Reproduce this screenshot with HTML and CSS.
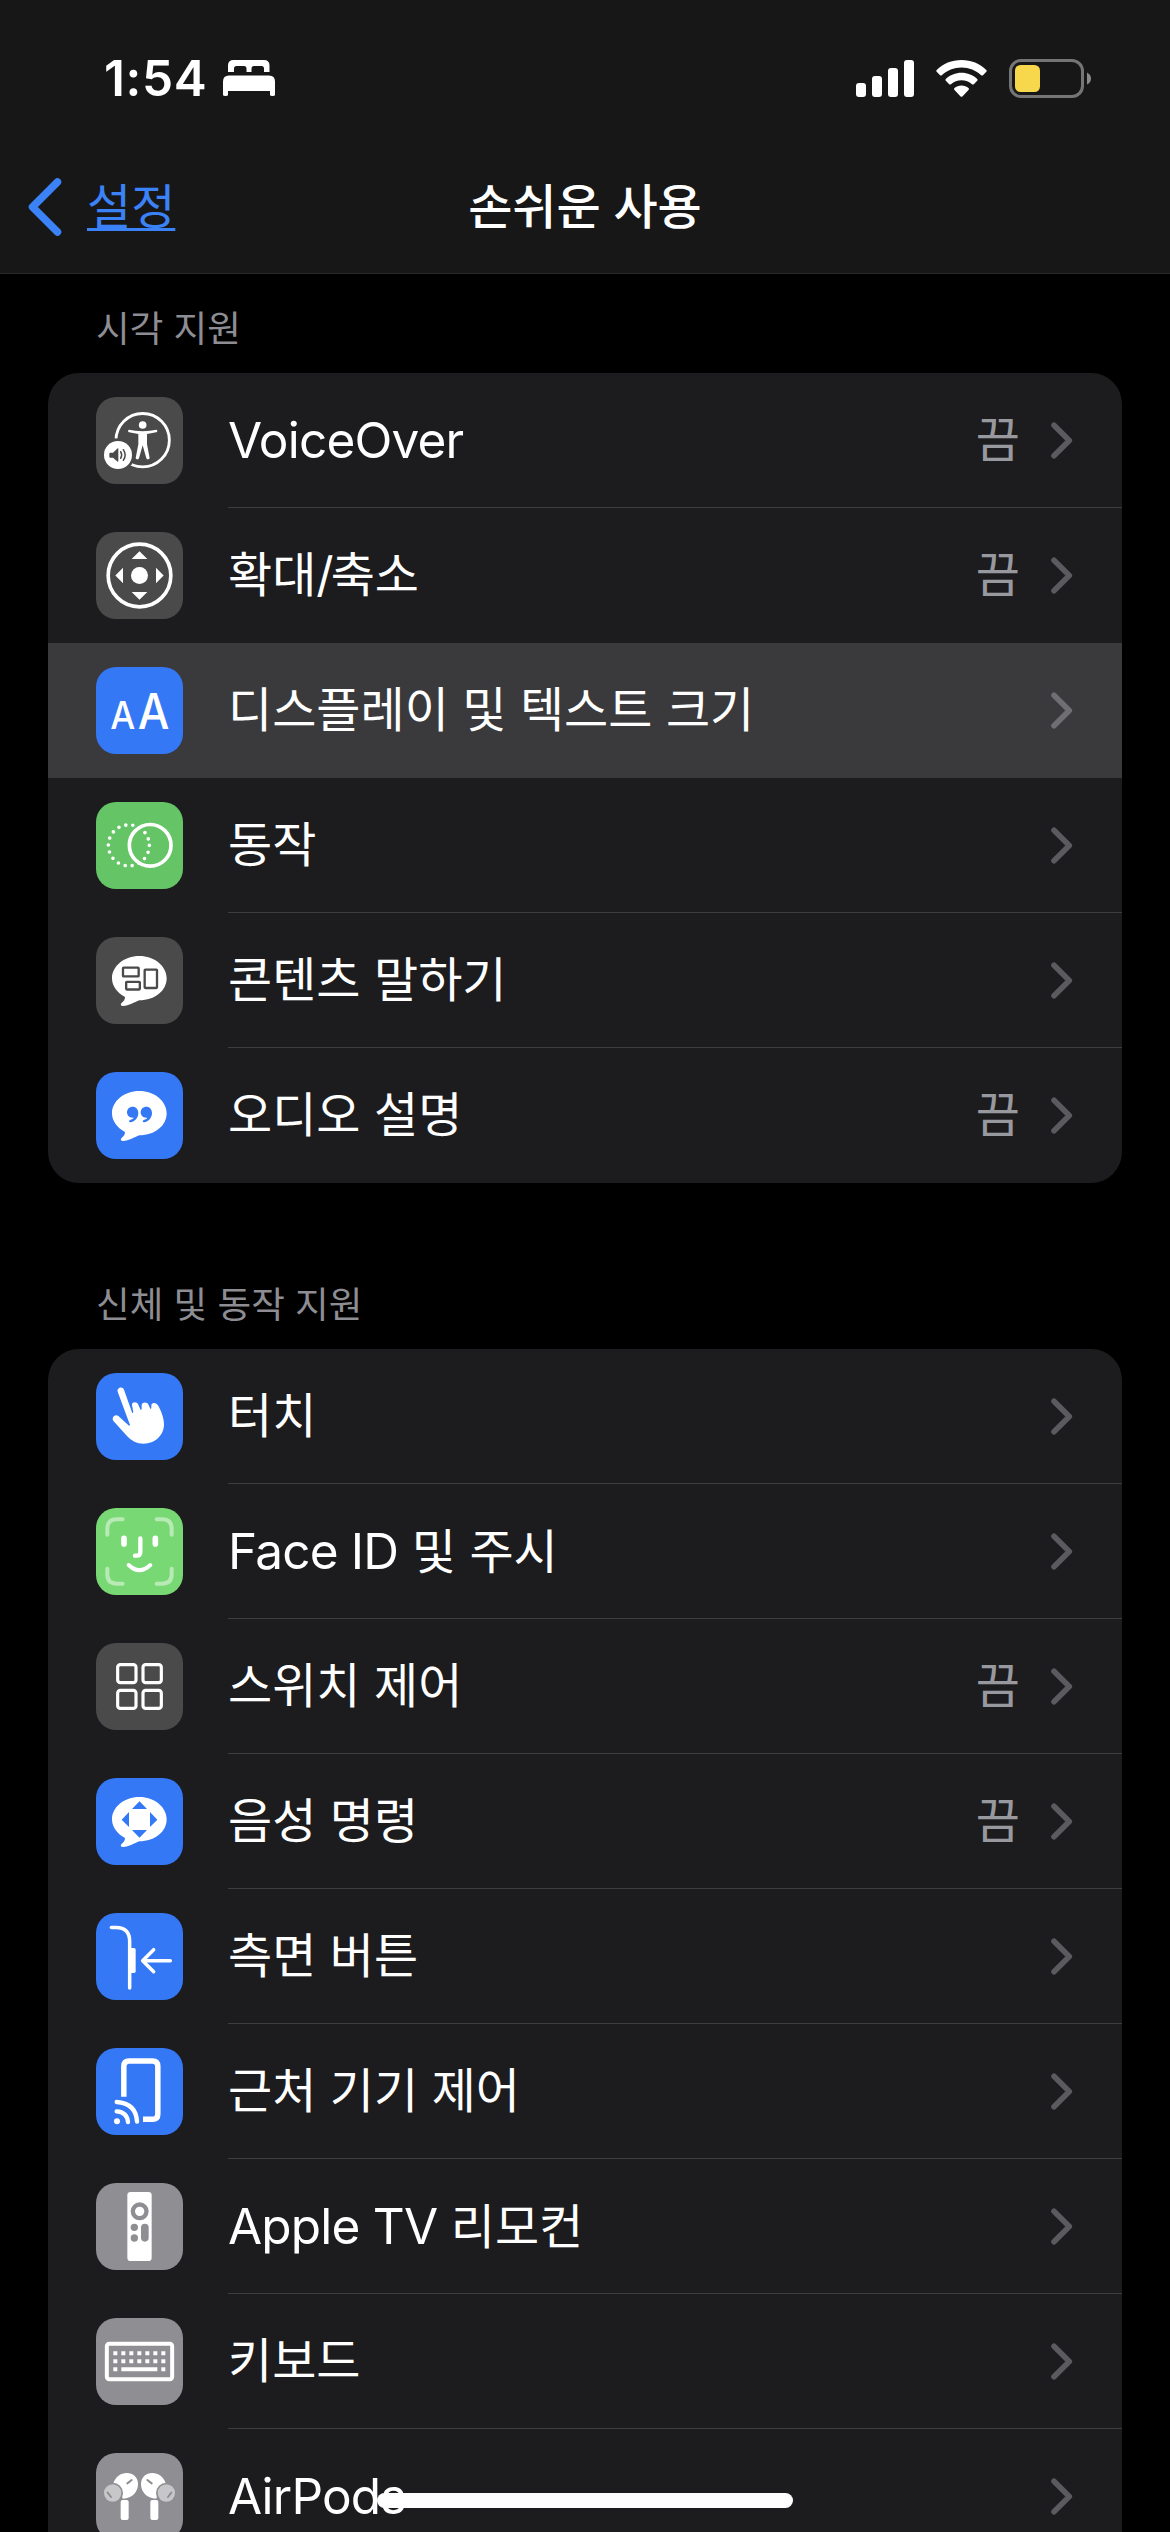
FILE: index.html
```html
<!DOCTYPE html>
<html lang="ko">
<head>
<meta charset="utf-8">
<title>손쉬운 사용</title>
<link rel="stylesheet" href="styles.css">
</head>
<body>
<svg class="defs" width="0" height="0">
  <symbol id="chevron" viewBox="0 0 22 37"><path d="M3 3.2 18.3 18.5 3 33.8" fill="none" stroke="currentColor" stroke-width="5.6" stroke-linecap="round" stroke-linejoin="round"/></symbol>
  <symbol id="bubble" viewBox="0 0 261 261"><path fill="#fff" d="M130 57c45 0 82 30 82 67s-35 66-82 66c-15 6-31 16-49 17-7 0-8-5-5-8 7-6 11-11 11-19-23-12-39-32-39-56 0-37 37-67 82-67z"/></symbol>
</svg>
<div class="screen">
  <header class="top">
    <div class="status">
      <div class="status-left">
        <span class="time">1:54</span>
        <svg class="bed" width="52" height="36" viewBox="0 0 52 36" fill="#fff"><path d="M5 12V5.500Q5 0 10.500 0h30.500Q46.500 0 46.500 5.500V12H41V8.500q0-2.500-2.500-2.500H31q-2.500 0-2.500 2.500V12h-5V8.500Q23.500 6 21 6h-7.500Q11 6 11 8.500V12z"/><path d="M0 35V21.500Q0 15.500 6 15.500h40q6 0 6 6V35q0 1-2.500 1T47 35v-4H5v4q0 1-2.500 1T0 35z"/></svg>
      </div>
      <div class="status-right">
        <svg width="58" height="37" viewBox="0 0 58 37" fill="#fff"><rect y="23" width="10" height="14" rx="3"/><rect x="16" y="16" width="10" height="21" rx="3"/><rect x="32" y="8" width="10" height="29" rx="3"/><rect x="48" width="10" height="37" rx="3"/></svg>
        <svg class="wifi" width="51" height="37" viewBox="0 0 51 37" fill="#fff"><path d="M25.500 0C35 0 44 3.600 50.300 10q.8.900 0 1.800l-3.300 3.400q-.9.800-1.800 0C40 10.400 33 7.400 25.500 7.400S11 10.400 5.800 15.200q-.9.800-1.800 0L.7 11.800q-.8-.9 0-1.800C7 3.600 16 0 25.500 0z"/><path d="M25.500 12.700c6 0 11.500 2.300 15.700 6.200q.9.900 0 1.800l-3.400 3.500q-.9.800-1.800 0c-2.800-2.500-6.500-4-10.500-4s-7.700 1.500-10.500 4q-.9.800-1.800 0l-3.400-3.500q-.9-.9 0-1.800c4.200-3.900 9.700-6.200 15.700-6.200z"/><path d="M25.500 25.500c2.700 0 5.200 1 7 2.600q.9.900 0 1.800l-6.100 6.500q-.9.800-1.800 0l-6.100-6.500q-.9-.9 0-1.800c1.800-1.600 4.300-2.600 7-2.600z"/></svg>
        <svg class="battery" width="83" height="39" viewBox="0 0 83 39"><rect x="1.500" y="1.500" width="72" height="36" rx="10.500" fill="none" stroke="#757575" stroke-width="3"/><path d="M78 13.500q4 2 4 6t-4 6z" fill="#8a8a8a"/><rect x="6" y="6" width="25" height="27" rx="5.500" fill="#f7d74c"/></svg>
      </div>
    </div>
    <nav class="nav">
      <a class="back"><svg width="34" height="58" viewBox="0 0 34 58"><path d="M29.500 4 4.500 29l25 25" fill="none" stroke="#3b82f7" stroke-width="7.500" stroke-linecap="round" stroke-linejoin="round"/></svg><span class="back-text">설정</span></a>
      <h1 class="title">손쉬운 사용</h1>
      <span></span>
    </nav>
  </header>

  <main class="content">
    <h2 class="section-title">시각 지원</h2>
    <ul class="card">
      <li class="row">
        <svg class="icon dark" viewBox="0 0 261 261"><circle cx="140" cy="129.500" r="80" fill="none" stroke="#fff" stroke-width="8.500"/><circle cx="66" cy="174" r="50" fill="#4a4a4a"/><circle cx="66" cy="174" r="42" fill="#fff"/><g fill="#fff"><circle cx="140" cy="84" r="11.500"/><path d="M99 98q18 4 41 5 23-1 41-5 3 1 3 4t-3 4l-28 5v31l8 41q0 3-4 4t-6-3l-11-39-11 39q-2 4-6 3t-4-4l8-41v-31l-28-5q-3-1-3-4t3-4z"/></g><path d="M42 167h9l14-13q2-1 2 2v36q0 3-2 2l-14-12h-9q-2-1-2-3v-9q0-3 2-3z" fill="#4a4a4a"/><path d="M74 164q6 10 0 20M82 158q11 16 0 32" fill="none" stroke="#4a4a4a" stroke-width="4.500" stroke-linecap="round"/></svg>
        <div class="body"><span class="label"><span class="latin">VoiceOver</span></span><span class="value">끔</span><svg class="chev"><use href="#chevron"/></svg></div>
      </li>
      <li class="row">
        <svg class="icon dark" viewBox="0 0 261 261"><circle cx="130.500" cy="130.500" r="94" fill="none" stroke="#fff" stroke-width="11"/><g fill="#fff"><circle cx="130.500" cy="130.500" r="25.500"/><path d="M130.500 58 154 81h-47zM130.500 203 154 180h-47zM58 130.500 81 107v47zM203 130.500 180 107v47z"/></g></svg>
        <div class="body"><span class="label">확대<span class="slash">/</span>축소</span><span class="value">끔</span><svg class="chev"><use href="#chevron"/></svg></div>
      </li>
      <li class="row selected">
        <svg class="icon blue" viewBox="0 0 261 261"><g class="aa"><text x="43" y="185" font-size="115" textLength="75" lengthAdjust="spacingAndGlyphs">A</text><text x="125" y="185" font-size="147" textLength="95" lengthAdjust="spacingAndGlyphs">A</text></g></svg>
        <div class="body"><span class="label">디스플레이 및 텍스트 크기</span><svg class="chev"><use href="#chevron"/></svg></div>
      </li>
      <li class="row">
        <svg class="icon green" viewBox="0 0 261 261" fill="none" stroke="#fff"><circle cx="162.500" cy="130" r="62.500" stroke-width="11"/><circle cx="98.500" cy="130" r="61.500" stroke-width="11" stroke-linecap="round" stroke-dasharray="0 20" pathLength="360"/></svg>
        <div class="body"><span class="label">동작</span><svg class="chev"><use href="#chevron"/></svg></div>
      </li>
      <li class="row">
        <svg class="icon dark" viewBox="0 0 261 261"><use href="#bubble"/><g fill="none" stroke="#4a4a4a" stroke-width="7"><rect x="81" y="92" width="47" height="26" rx="2"/><rect x="90.500" y="134.500" width="41" height="23" rx="2"/><rect x="146" y="98" width="37" height="55" rx="2"/></g></svg>
        <div class="body"><span class="label">콘텐츠 말하기</span><svg class="chev"><use href="#chevron"/></svg></div>
      </li>
      <li class="row">
        <svg class="icon blue" viewBox="0 0 261 261"><use href="#bubble"/><path fill="#3478f6" d="M110 104c10 0 17 8 17 19 0 14-10 26-24 28-5 0-5-5-1-7 6-2 10-4 11-7-12 2-20-6-20-16s7-17 17-17z"/><path fill="#3478f6" d="M151 104c10 0 17 8 17 19 0 14-10 26-24 28-5 0-5-5-1-7 6-2 10-4 11-7-12 2-20-6-20-16s7-17 17-17z"/></svg>
        <div class="body"><span class="label">오디오 설명</span><span class="value">끔</span><svg class="chev"><use href="#chevron"/></svg></div>
      </li>
    </ul>

    <h2 class="section-title second">신체 및 동작 지원</h2>
    <ul class="card">
      <li class="row">
        <svg class="icon blue" viewBox="0 0 261 261"><path fill="#fff" d="M65 56C62 43 80 38 84 50l25 71 3-4-4-20c-2-10 14-13 19-2l7 16 3-2v-12c0-10 16-12 21-1l5 12 3-2v-8c-1-10 16-12 23 4 9 18 15 36 15 52 0 34-28 58-61 58-21 0-36-8-50-23L53 145c-9-11 5-25 15-15l31 28 3-2z"/></svg>
        <div class="body"><span class="label">터치</span><svg class="chev"><use href="#chevron"/></svg></div>
      </li>
      <li class="row">
        <svg class="icon face" viewBox="0 0 261 261" fill="none" stroke="#fff" stroke-linecap="round"><path stroke="#b8eab5" stroke-width="12" d="M34 80V62q0-28 28-28h18M182 34h17q28 0 28 28v18M227 182v17q0 28-28 28h-17M80 227H62q-28 0-28-28v-17"/><path stroke-width="17" d="M84 91v17M178 91v17"/><path stroke-width="13" d="M133 91v40q0 12-11 12h-5"/><path stroke-width="12" d="M98 171q32 31 65 0"/></svg>
        <div class="body"><span class="label"><span class="latin">Face ID</span> 및 주시</span><svg class="chev"><use href="#chevron"/></svg></div>
      </li>
      <li class="row">
        <svg class="icon dark" viewBox="0 0 261 261" fill="none" stroke="#fff" stroke-width="9.500"><rect x="65" y="65" width="55" height="54" rx="8"/><rect x="141" y="65" width="55" height="54" rx="8"/><rect x="65" y="142" width="55" height="54" rx="8"/><rect x="141" y="142" width="55" height="54" rx="8"/></svg>
        <div class="body"><span class="label">스위치 제어</span><span class="value">끔</span><svg class="chev"><use href="#chevron"/></svg></div>
      </li>
      <li class="row">
        <svg class="icon blue" viewBox="0 0 261 261"><use href="#bubble"/><path fill="#3478f6" d="M130.500 70 153 93h-45zM130.500 179 153 156h-45zM77 125 99 102v45zM184 125 162 102v45z"/></svg>
        <div class="body"><span class="label">음성 명령</span><span class="value">끔</span><svg class="chev"><use href="#chevron"/></svg></div>
      </li>
      <li class="row">
        <svg class="icon blue" viewBox="0 0 261 261" fill="none" stroke="#fff" stroke-width="10.500" stroke-linecap="round" stroke-linejoin="round"><path d="M46 43.500h14q41 0 41 42V225"/><rect x="101" y="105" width="18" height="75" rx="5" fill="#fff" stroke="none"/><path d="M173 110 140 143l33 33M142 143h81"/></svg>
        <div class="body"><span class="label">측면 버튼</span><svg class="chev"><use href="#chevron"/></svg></div>
      </li>
      <li class="row">
        <svg class="icon blue" viewBox="0 0 261 261" fill="none" stroke="#fff"><path stroke-width="16.500" d="M83.500 146V55q0-16 16-16h70q16 0 16 16v143q0 16-16 16H141"/><path stroke-width="13" stroke-linecap="round" d="M62 162q58 4 61 59M62 190q31 2 34 32"/><circle cx="63" cy="220" r="9" fill="#fff" stroke="none"/></svg>
        <div class="body"><span class="label">근처 기기 제어</span><svg class="chev"><use href="#chevron"/></svg></div>
      </li>
      <li class="row">
        <svg class="icon gray" viewBox="0 0 261 261"><rect x="94" y="27" width="73" height="207" rx="10" fill="#fff"/><circle cx="131" cy="85" r="20.500" fill="none" stroke="#8e8e93" stroke-width="13"/><g fill="#8e8e93"><circle cx="115" cy="133" r="11"/><circle cx="115" cy="165" r="11"/><rect x="135" y="122" width="23" height="54" rx="11.500"/></g></svg>
        <div class="body"><span class="label"><span class="latin">Apple TV</span> 리모컨</span><svg class="chev"><use href="#chevron"/></svg></div>
      </li>
      <li class="row">
        <svg class="icon gray" viewBox="0 0 261 261" fill="none" stroke="#fff"><rect x="32.500" y="77.500" width="196" height="106" rx="7" stroke-width="12"/><path stroke-width="12" stroke-dasharray="12 12" d="M52 106h156M52 130h156"/><path stroke-width="12" d="M52 154h12M76 154h108M196 154h12"/></svg>
        <div class="body"><span class="label">키보드</span><svg class="chev"><use href="#chevron"/></svg></div>
      </li>
      <li class="row">
        <svg class="icon gray" viewBox="0 0 261 261"><g id="bud"><path fill="#fff" d="M52 91C58 71 74 60 92 60c20 0 34 14 34 33 0 24-17 43-45 44z"/><rect x="74" y="141" width="24" height="60" rx="6" fill="#fff"/><circle cx="50" cy="120" r="31" fill="#8e8e93"/><circle cx="50" cy="120" r="26" fill="#c7c7c9"/><path d="M94 91 107 81M35 119l10 13" stroke="#8e8e93" stroke-width="6" stroke-linecap="round"/></g><use href="#bud" transform="matrix(-1 0 0 1 261 0)"/></svg>
        <div class="body"><span class="label"><span class="latin">AirPods</span></span><svg class="chev"><use href="#chevron"/></svg></div>
      </li>
    </ul>
  </main>
  <div class="home-indicator"></div>
</div>
</body>
</html>
```
FILE: styles.css
```css
* { box-sizing: border-box; margin: 0; padding: 0; }

body {
  background: #000;
  color: #fff;
  font-family: "Inter", "Noto Sans CJK KR", sans-serif;
  font-size: 48px;
  overflow: hidden;
}

.defs { display: none; }

.screen {
  position: relative;
  width: 1170px;
  height: 2532px;
  overflow: hidden;
}

.top {
  height: 274px;
  background: #171717;
  border-bottom: 1px solid #2a2a2a;
}

.status {
  height: 141px;
  padding: 15px 78px 0 104px;
  display: flex;
  justify-content: space-between;
  align-items: center;
}

.status-left, .status-right { display: flex; align-items: center; }
.time { width: 119px; font-size: 49.5px; font-weight: 600; letter-spacing: 0.6px; white-space: nowrap; }
.wifi { margin-left: 22px; }
.battery { margin-left: 22px; }

.nav {
  height: 132px;
  padding: 0 28px;
  display: grid;
  grid-template-columns: 1fr auto 1fr;
  align-items: center;
}

.back { display: flex; align-items: center; gap: 25px; color: #3b82f7; }

.back-text {
  line-height: 60px;
  margin-bottom: 1px;
  text-decoration: underline;
  text-decoration-thickness: 3px;
  text-decoration-skip-ink: none;
  text-underline-offset: 4px;
}

.title { font-size: 48px; font-weight: 500; line-height: 60px; }

.section-title {
  padding: 31px 96px 0;
  height: 99px;
  font-size: 36.6px;
  font-weight: 400;
  line-height: 48px;
  color: #8d8d93;
}

.section-title.second { height: 166px; padding-top: 98px; }

.card {
  margin: 0 48px;
  list-style: none;
  background: #1c1c1e;
  border-radius: 31px;
  overflow: hidden;
}

.row {
  height: 135px;
  padding-left: 48px;
  display: flex;
  align-items: center;
  gap: 45px;
}

.icon { flex: none; width: 87px; height: 87px; border-radius: 20px; }
.dark { background: #4a4a4a; }
.blue { background: #3478f6; }
.green { background: #65c466; }
.face { background: #78d873; }
.gray { background: #8e8e93; }

.aa { fill: #fff; font-family: "Inter", sans-serif; font-weight: 500; }

.body {
  flex: 1;
  height: 135px;
  padding-right: 49px;
  display: flex;
  align-items: center;
  border-bottom: 1px solid #3d3d40;
}

.row:last-child .body, .row.selected .body, .row:has(+ .selected) .body { border-bottom-color: transparent; }
.selected { background: #3a3a3c; }

.label { flex: 1; line-height: 60px; white-space: nowrap; }
.latin { font-size: 49.5px; letter-spacing: -0.8px; }
.slash { letter-spacing: -3px; }
.value { margin-right: 31px; line-height: 60px; color: #98989f; }
.chev { flex: none; width: 22px; height: 37px; color: #5a5a5f; }
.selected .chev { color: #6e6e73; }

.home-indicator {
  position: absolute;
  left: 377px;
  top: 2493px;
  width: 416px;
  height: 15px;
  border-radius: 8px;
  background: #fff;
}
```
